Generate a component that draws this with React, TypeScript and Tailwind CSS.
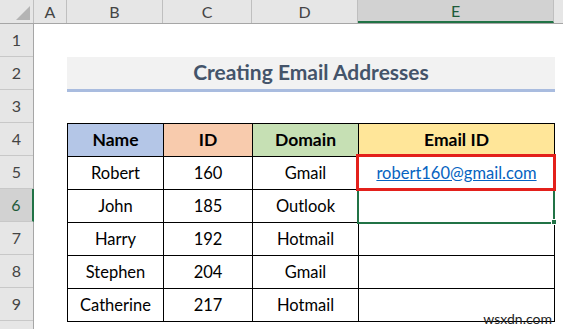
import React from "react";

const cols = [
  { label: "A", w: "w-[33px]" },
  { label: "B", w: "w-[96px]" },
  { label: "C", w: "w-[89px]" },
  { label: "D", w: "w-[106px]" },
  { label: "E", w: "w-[196px]", selected: true },
];

const rows = [
  { name: "Robert", id: 160, domain: "Gmail", email: "robert160@gmail.com" },
  { name: "John", id: 185, domain: "Outlook", email: "" },
  { name: "Harry", id: 192, domain: "Hotmail", email: "" },
  { name: "Stephen", id: 204, domain: "Gmail", email: "" },
  { name: "Catherine", id: 217, domain: "Hotmail", email: "" },
];

const font = { fontFamily: "Lato, 'Liberation Sans', sans-serif" };

export default function App() {
  return (
    <div
      className="relative h-[329px] w-[563px] overflow-hidden bg-white text-[16.5px] text-black"
      style={font}
    >
      {/* column headers */}
      <div className="flex h-[24px] border-b border-[#a6a6a6] bg-[#e6e6e6] text-[16px] text-[#444]">
        <div className="relative w-[34px] border-r border-[#bfbfbf]">
          <svg className="absolute bottom-[3px] right-[3px]" width="14" height="14">
            <polygon points="14,0 14,14 0,14" fill="#b4b4b4" />
          </svg>
        </div>
        {cols.map((c) =>
          c.selected ? (
            <div
              key={c.label}
              className={`${c.w} flex items-center justify-center border-r border-[#bfbfbf] border-b-2 border-b-[#217346] bg-[#d2d2d2] text-[#1e5b3a]`}
            >
              {c.label}
            </div>
          ) : (
            <div
              key={c.label}
              className={`${c.w} flex items-center justify-center border-r border-[#bfbfbf]`}
            >
              {c.label}
            </div>
          )
        )}
        <div className="flex-1" />
      </div>

      <div className="flex">
        {/* row headers */}
        <div className="w-[34px] shrink-0 border-r border-[#a6a6a6] bg-[#e6e6e6] text-[16px] text-[#444]">
          {[1, 2, 3, 4, 5, 6, 7, 8, 9].map((n) =>
            n === 6 ? (
              <div
                key={n}
                className="-mr-px flex h-[33px] items-center justify-center border-b border-[#c8c8c8] border-r-2 border-r-[#217346] bg-[#d2d2d2] text-[#1e5b3a]"
              >
                {n}
              </div>
            ) : (
              <div
                key={n}
                className="flex h-[33px] items-center justify-center border-b border-[#c8c8c8]"
              >
                {n}
              </div>
            )
          )}
          <div className="h-[33px]" />
        </div>

        {/* sheet body */}
        <div className="flex flex-col pl-[33px]">
          <div className="h-[33px]" />
          <div className="flex h-[35px] w-[488px] items-center justify-center border-b-[3px] border-[#a9bcdf] bg-[#f2f2f2] pb-[2px] text-[21px] font-bold text-[#44546a]">
            Creating Email Addresses
          </div>
          <div className="h-[31px]" />

          <div className="w-[488px] border-l border-t border-black">
            <div className="flex text-[17.5px] font-bold">
              <div className="flex h-[33px] w-[96px] items-center justify-center border-b border-r border-black bg-[#b4c6e7]">
                Name
              </div>
              <div className="flex h-[33px] w-[89px] items-center justify-center border-b border-r border-black bg-[#f8cbad]">
                ID
              </div>
              <div className="flex h-[33px] w-[106px] items-center justify-center border-b border-r border-black bg-[#c6e0b4]">
                Domain
              </div>
              <div className="flex h-[33px] w-[196px] items-center justify-center border-b border-r border-black bg-[#ffe699]">
                Email ID
              </div>
            </div>
            {rows.map((r) => (
              <div key={r.name} className="flex">
                <div className="flex h-[33px] w-[96px] items-center justify-center border-b border-r border-black">
                  {r.name}
                </div>
                <div className="flex h-[33px] w-[89px] items-center justify-center border-b border-r border-black">
                  {r.id}
                </div>
                <div className="flex h-[33px] w-[106px] items-center justify-center border-b border-r border-black">
                  {r.domain}
                </div>
                <div className="flex h-[33px] w-[196px] items-center justify-center border-b border-r border-black text-[#0563c1] underline">
                  {r.email}
                </div>
              </div>
            ))}
          </div>
        </div>
      </div>

      {/* active cell E6 */}
      <div className="absolute left-[357px] top-[188px] h-[36px] w-[198px] border-2 border-[#217346]" />
      <div className="absolute left-[551px] top-[219px] h-[6px] w-[6px] border border-white bg-[#217346]" />

      {/* highlight on E5 */}
      <div className="absolute left-[356px] top-[154px] h-[37px] w-[200px] border-[3px] border-[#e3201b]" />

      <div className="absolute bottom-[3px] right-[11px] text-[14px] leading-none text-[#222]">
        wsxdn.com
      </div>
    </div>
  );
}
